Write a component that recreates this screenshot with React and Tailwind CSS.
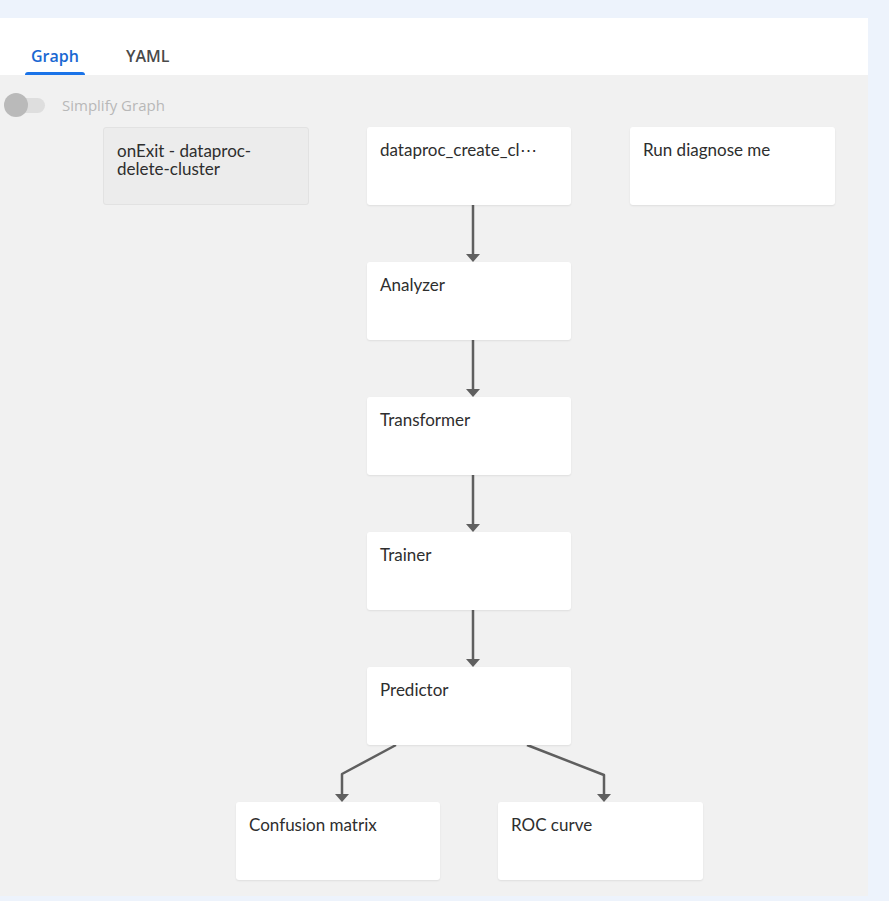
import React from "react";

const nodes = [
  { label: ["onExit - dataproc-", "delete-cluster"], left: "left-[103px]", top: "top-[52px]", w: "w-[206px]", exit: true },
  { label: ["dataproc_create_cl\u22EF"], left: "left-[367px]", top: "top-[52px]", w: "w-[204px]" },
  { label: ["Run diagnose me"], left: "left-[630px]", top: "top-[52px]", w: "w-[205px]" },
  { label: ["Analyzer"], left: "left-[367px]", top: "top-[187px]", w: "w-[204px]" },
  { label: ["Transformer"], left: "left-[367px]", top: "top-[322px]", w: "w-[204px]" },
  { label: ["Trainer"], left: "left-[367px]", top: "top-[457px]", w: "w-[204px]" },
  { label: ["Predictor"], left: "left-[367px]", top: "top-[592px]", w: "w-[204px]" },
  { label: ["Confusion matrix"], left: "left-[236px]", top: "top-[727px]", w: "w-[204px]" },
  { label: ["ROC curve"], left: "left-[498px]", top: "top-[727px]", w: "w-[205px]" },
];

function Arrow({ x, y }) {
  return <polygon points={`${x - 7},${y - 8} ${x + 7},${y - 8} ${x},${y}`} fill="#5f5f5f" />;
}

function Edges() {
  const verticals = [
    [130, 187],
    [265, 322],
    [400, 457],
    [535, 592],
  ];
  return (
    <svg className="absolute inset-0 pointer-events-none" width="868" height="821">
      {verticals.map(([a, b], i) => (
        <g key={i}>
          <line x1="473" y1={a} x2="473" y2={b - 7} stroke="#5f5f5f" strokeWidth="2.5" />
          <Arrow x={473} y={b} />
        </g>
      ))}
      <polyline points="396,670 342,699 342,720" fill="none" stroke="#5f5f5f" strokeWidth="2.5" strokeLinejoin="round" />
      <Arrow x={342} y={727} />
      <polyline points="527,670 604,700 604,720" fill="none" stroke="#5f5f5f" strokeWidth="2.5" strokeLinejoin="round" />
      <Arrow x={604} y={727} />
    </svg>
  );
}

export default function App() {
  return (
    <div className="w-[889px] h-[901px] bg-[#edf3fc] pt-[18px] pr-[21px] pb-[5px] flex flex-col" style={{ fontFamily: "'Open Sans', sans-serif" }}>
      <div className="h-[57px] bg-white flex items-end pl-[25px] gap-[35px] shrink-0">
        <div className="relative h-[38px] px-[6px] flex items-center text-[16px] font-semibold text-[#1967d2]">
          Graph
          <span className="absolute left-0 right-0 bottom-0 h-[3px] rounded-t-[3px] bg-[#1a73e8]" />
        </div>
        <div className="relative h-[38px] px-[6px] flex items-center text-[16px] font-semibold text-[#4a4a4a]">
          YAML
        </div>
      </div>
      <div className="relative flex-1 bg-[#f1f1f1]">
        <div className="flex items-center h-[24px] mt-[18px] pl-[4px]">
          <div className="relative w-[41px] h-[24px] flex items-center">
            <div className="ml-[4px] w-[37px] h-[15px] rounded-full bg-[#dedede]" />
            <div className="absolute left-0 top-0 w-[24px] h-[24px] rounded-full bg-[#bababa]" />
          </div>
          <span className="ml-[17px] text-[15px] text-[#b8b8b8]">Simplify Graph</span>
        </div>
        <Edges />
        {nodes.map((n, i) => (
          <div
            key={i}
            className={`absolute ${n.left} ${n.top} ${n.w} h-[78px] rounded-[3px] px-[13px] pt-[14px] text-[17px] leading-[18px] text-[#2e2e2e] ${
              n.exit ? "bg-[#ececec] border border-[#e2e2e2]" : "bg-white shadow-[0_1px_2px_rgba(0,0,0,0.08)]"
            }`}
            style={{ fontFamily: "Lato, sans-serif" }}
          >
            {n.label.map((l, j) => (
              <div key={j}>{l}</div>
            ))}
          </div>
        ))}
      </div>
    </div>
  );
}
